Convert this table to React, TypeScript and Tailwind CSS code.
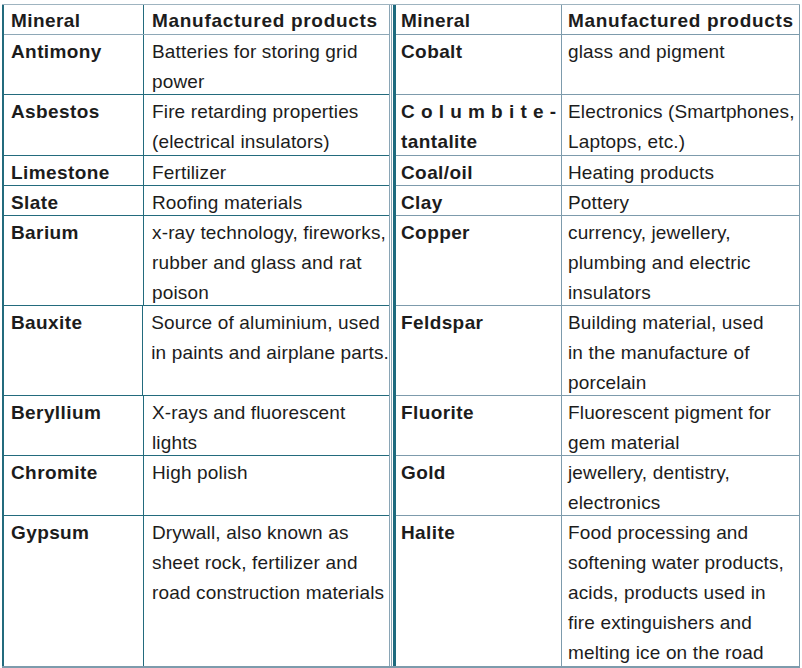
import React from "react";

type Row = {
  h: string;
  a: string;
  b: React.ReactNode;
  c: React.ReactNode;
  d: React.ReactNode;
};

const rows: Row[] = [
  { h: "h-[60px]", a: "Antimony", b: <>Batteries for storing grid<br />power</>, c: "Cobalt", d: "glass and pigment" },
  {
    h: "h-[61px]",
    a: "Asbestos",
    b: <>Fire retarding properties<br />(electrical insulators)</>,
    c: (
      <>
        <span className="tracking-[6.2px]">Columbite-</span>
        <br />
        tantalite
      </>
    ),
    d: <>Electronics (Smartphones,<br />Laptops, etc.)</>,
  },
  { h: "h-[30px]", a: "Limestone", b: "Fertilizer", c: "Coal/oil", d: "Heating products" },
  { h: "h-[30px]", a: "Slate", b: "Roofing materials", c: "Clay", d: "Pottery" },
  {
    h: "h-[90px]",
    a: "Barium",
    b: <>x-ray technology, fireworks,<br />rubber and glass and rat<br />poison</>,
    c: "Copper",
    d: <>currency, jewellery,<br />plumbing and electric<br />insulators</>,
  },
  {
    h: "h-[90px]",
    a: "Bauxite",
    b: <>Source of aluminium, used<br />in paints and airplane parts.</>,
    c: "Feldspar",
    d: <>Building material, used<br />in the manufacture of<br />porcelain</>,
  },
  {
    h: "h-[60px]",
    a: "Beryllium",
    b: <>X-rays and fluorescent<br />lights</>,
    c: "Fluorite",
    d: <>Fluorescent pigment for<br />gem material</>,
  },
  {
    h: "h-[60px]",
    a: "Chromite",
    b: "High polish",
    c: "Gold",
    d: <>jewellery, dentistry,<br />electronics</>,
  },
  {
    h: "h-[150px]",
    a: "Gypsum",
    b: <>Drywall, also known as<br />sheet rock, fertilizer and<br />road construction materials</>,
    c: "Halite",
    d: <>Food processing and<br />softening water products,<br />acids, products used in<br />fire extinguishers and<br />melting ice on the road</>,
  },
];

export default function App() {
  return (
    <div
      className="w-[802px] h-[668px] bg-white pt-[4px] pl-[2px] text-[#1c1c1c] text-[19px] leading-[30px] whitespace-nowrap"
      style={{ fontFamily: '"Liberation Sans", Arial, sans-serif' }}
    >
      <div className="w-[798px] border-t border-[#9fb4c0]">
        <div className="flex border-b-2 border-[#7d9bac]">
          {/* Left half */}
          <div className="flex flex-col w-[387px] border-l-2 border-[#236b7d]">
            <div className="flex h-[30px] border-b border-[#8ea8b7]">
              <div className="w-[140px] border-r border-[#236b7d] pl-[7px] pt-[1px] font-bold tracking-[0.4px]">Mineral</div>
              <div className="flex-1 pl-[8px] pt-[1px] font-bold tracking-[0.7px]">Manufactured products</div>
            </div>
            {rows.map((r, i) => (
              <div
                key={i}
                className={`flex ${r.h} ${i === rows.length - 1 ? "" : "border-b border-[#236b7d]"}`}
              >
                <div className="w-[140px] border-r border-[#236b7d] pl-[7px] pt-[2px] font-bold tracking-[0.4px]">{r.a}</div>
                <div className="flex-1 pl-[8px] pt-[2px] tracking-[0.15px]">{r.b}</div>
              </div>
            ))}
          </div>
          {/* Divider */}
          <div className="flex w-[7px]">
            <div className="w-[1px] bg-[#8aa5b5]" />
            <div className="w-[1px] bg-white" />
            <div className="w-[1px] bg-[#8aa5b5]" />
            <div className="w-[1px] bg-white" />
            <div className="w-[3px] bg-[#1d6a7e]" />
          </div>
          {/* Right half */}
          <div className="flex flex-col flex-1 border-r border-[#7d9bac]">
            <div className="flex h-[30px] border-b border-[#7d9bac]">
              <div className="w-[166px] border-r border-[#7d9bac] pl-[5px] pt-[1px] font-bold tracking-[0.4px]">Mineral</div>
              <div className="flex-1 pl-[6px] pt-[1px] font-bold tracking-[0.7px]">Manufactured products</div>
            </div>
            {rows.map((r, i) => (
              <div
                key={i}
                className={`flex ${r.h} ${i === rows.length - 1 ? "" : "border-b border-[#7d9bac]"}`}
              >
                <div className="w-[166px] border-r border-[#7d9bac] pl-[5px] pt-[2px] font-bold tracking-[0.4px]">{r.c}</div>
                <div className="flex-1 pl-[6px] pt-[2px] tracking-[0.15px]">{r.d}</div>
              </div>
            ))}
          </div>
        </div>
      </div>
    </div>
  );
}
